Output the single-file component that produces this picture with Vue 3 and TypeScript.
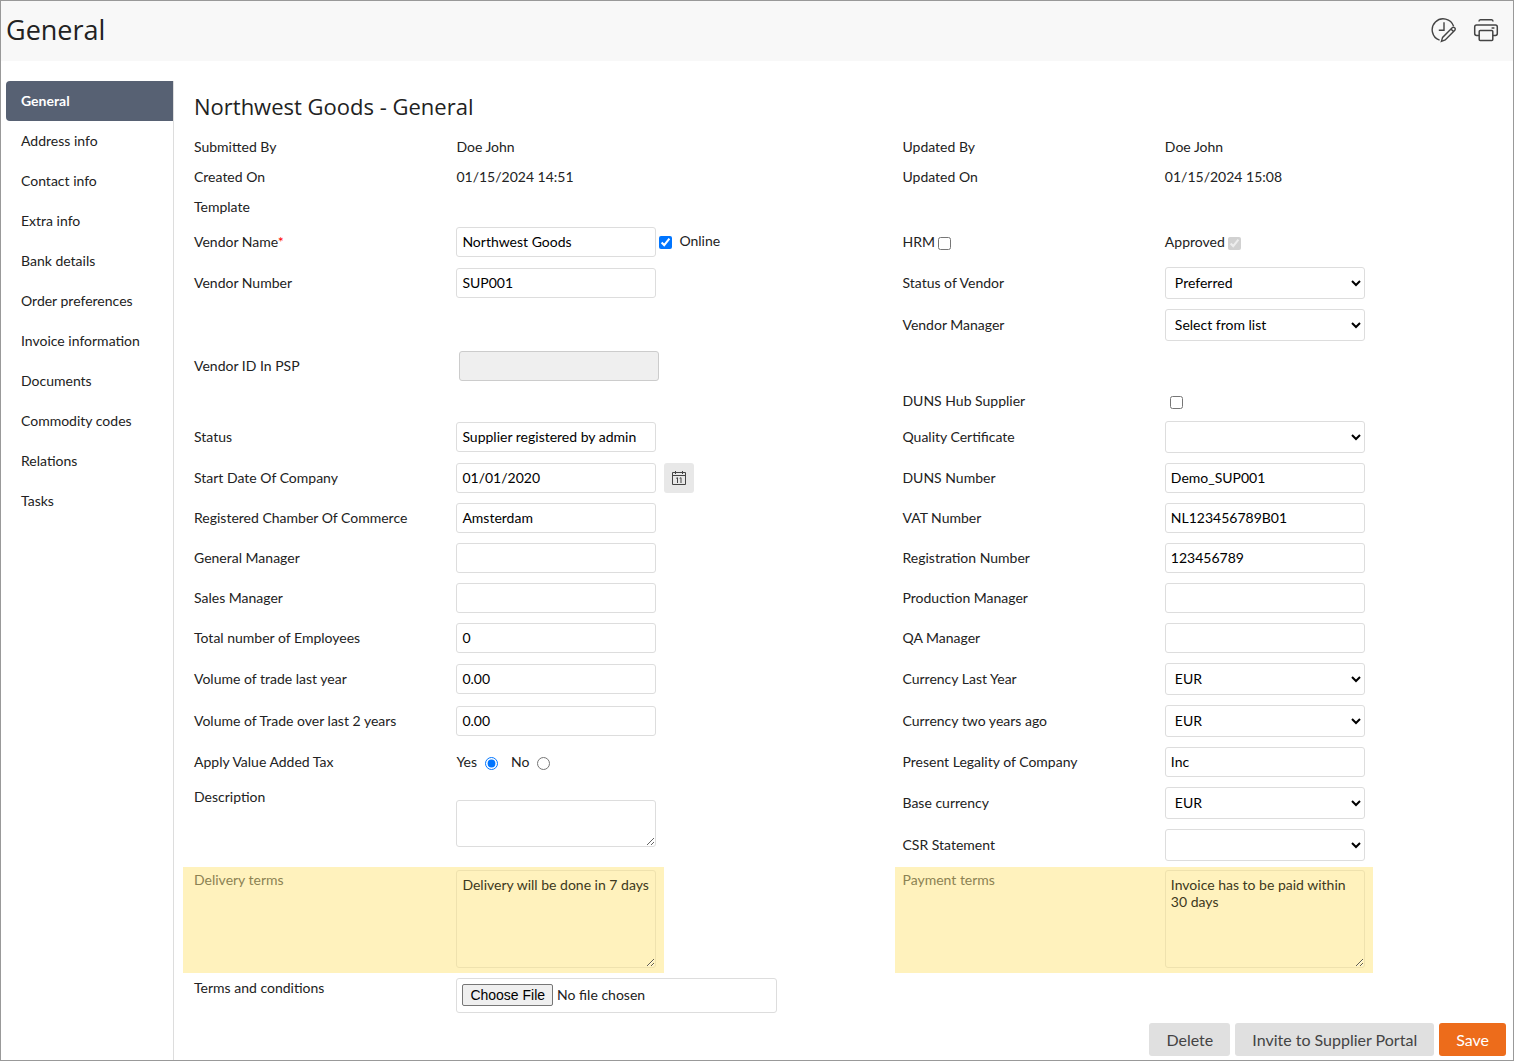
<script setup lang="ts">
import { reactive } from 'vue'

type Kind = 'static' | 'input' | 'select' | 'textarea' | 'checkbox' | 'vat' | 'flags' | 'file' | 'empty'

interface Field {
  id: string
  label: string
  kind: Kind
  value?: string
  side: 'left' | 'right'
  required?: boolean
  disabled?: boolean
  online?: boolean
  calendar?: boolean
  highlight?: boolean
  tall?: boolean
}

const navigation: string[] = [
  'General',
  'Address info',
  'Contact info',
  'Extra info',
  'Bank details',
  'Order preferences',
  'Invoice information',
  'Documents',
  'Commodity codes',
  'Relations',
  'Tasks',
]

const fields = reactive<Field[]>([
  { id: 'submitted-by', label: 'Submitted By', kind: 'static', value: 'Doe John', side: 'left' },
  { id: 'updated-by', label: 'Updated By', kind: 'static', value: 'Doe John', side: 'right' },
  { id: 'created-on', label: 'Created On', kind: 'static', value: '01/15/2024 14:51', side: 'left' },
  { id: 'updated-on', label: 'Updated On', kind: 'static', value: '01/15/2024 15:08', side: 'right' },
  { id: 'template', label: 'Template', kind: 'static', value: '', side: 'left' },
  { id: 'vendor-name', label: 'Vendor Name', kind: 'input', value: 'Northwest Goods', side: 'left', required: true, online: true },
  { id: 'hrm', label: 'HRM', kind: 'flags', side: 'right' },
  { id: 'vendor-number', label: 'Vendor Number', kind: 'input', value: 'SUP001', side: 'left' },
  { id: 'vendor-status', label: 'Status of Vendor', kind: 'select', value: 'Preferred', side: 'right' },
  { id: 'vendor-manager', label: 'Vendor Manager', kind: 'select', value: 'Select from list', side: 'right' },
  { id: 'psp-id', label: 'Vendor ID In PSP', kind: 'input', value: '', side: 'left', disabled: true },
  { id: 'spacer', label: '', kind: 'empty', side: 'right' },
  { id: 'spacer-hub', label: '', kind: 'empty', side: 'left' },
  { id: 'duns-hub', label: 'DUNS Hub Supplier', kind: 'checkbox', side: 'right' },
  { id: 'status', label: 'Status', kind: 'input', value: 'Supplier registered by admin', side: 'left' },
  { id: 'quality', label: 'Quality Certificate', kind: 'select', value: '', side: 'right' },
  { id: 'start-date', label: 'Start Date Of Company', kind: 'input', value: '01/01/2020', side: 'left', calendar: true },
  { id: 'duns-number', label: 'DUNS Number', kind: 'input', value: 'Demo_SUP001', side: 'right' },
  { id: 'chamber', label: 'Registered Chamber Of Commerce', kind: 'input', value: 'Amsterdam', side: 'left' },
  { id: 'vat-number', label: 'VAT Number', kind: 'input', value: 'NL123456789B01', side: 'right' },
  { id: 'general-manager', label: 'General Manager', kind: 'input', value: '', side: 'left' },
  { id: 'registration', label: 'Registration Number', kind: 'input', value: '123456789', side: 'right' },
  { id: 'sales-manager', label: 'Sales Manager', kind: 'input', value: '', side: 'left' },
  { id: 'production-manager', label: 'Production Manager', kind: 'input', value: '', side: 'right' },
  { id: 'employees', label: 'Total number of Employees', kind: 'input', value: '0', side: 'left' },
  { id: 'qa-manager', label: 'QA Manager', kind: 'input', value: '', side: 'right' },
  { id: 'trade-last-year', label: 'Volume of trade last year', kind: 'input', value: '0.00', side: 'left' },
  { id: 'currency-last-year', label: 'Currency Last Year', kind: 'select', value: 'EUR', side: 'right' },
  { id: 'trade-two-years', label: 'Volume of Trade over last 2 years', kind: 'input', value: '0.00', side: 'left' },
  { id: 'currency-two-years', label: 'Currency two years ago', kind: 'select', value: 'EUR', side: 'right' },
  { id: 'vat', label: 'Apply Value Added Tax', kind: 'vat', value: 'yes', side: 'left' },
  { id: 'legality', label: 'Present Legality of Company', kind: 'input', value: 'Inc', side: 'right' },
  { id: 'description', label: 'Description', kind: 'textarea', value: '', side: 'left', tall: true },
  { id: 'base-currency', label: 'Base currency', kind: 'select', value: 'EUR', side: 'right' },
  { id: 'csr', label: 'CSR Statement', kind: 'select', value: '', side: 'right' },
  { id: 'delivery-terms', label: 'Delivery terms', kind: 'textarea', value: 'Delivery will be done in 7 days', side: 'left', highlight: true },
  { id: 'payment-terms', label: 'Payment terms', kind: 'textarea', value: 'Invoice has to be paid within 30 days', side: 'right', highlight: true },
  { id: 'terms', label: 'Terms and conditions', kind: 'file', side: 'left' },
])

const flags = reactive({ online: true, hrm: false, approved: true, dunsHub: false })
</script>

<template>
  <div class="page">
    <header class="topbar">
      <h1>General</h1>
      <div class="tools">
        <button type="button" aria-label="Change history">
          <svg width="26" height="26" viewBox="0 0 26 26" fill="none" stroke="#444" stroke-width="1.4">
            <path d="M23.6 9.2A11 11 0 1 0 9.6 23.2" />
            <path d="M14 5.2v8H8.8" />
            <path d="M11.4 24.4l1.2-4 9.6-9.7q1.2-1 2.400.1t.2 2.400L15.200 23zM20.900 12l2.600 2.600" />
          </svg>
        </button>
        <button type="button" aria-label="Print">
          <svg width="26" height="26" viewBox="0 0 26 26" fill="none" stroke="#444" stroke-width="1.5">
            <path d="M6 4.600q0-1.800 1.400-1.800h11.200q1.400 0 1.400 1.800" />
            <path d="M6 18.500H3.600q-1.900 0-1.900-1.900V9.900q0-1.900 1.900-1.900h18.800q1.900 0 1.900 1.900v6.700q0 1.900-1.900 1.900H20" />
            <rect x="6.200" y="13.500" width="13.600" height="9.900" rx="1" />
            <path d="M18.600 11h2.800" />
          </svg>
        </button>
      </div>
    </header>

    <div class="body">
      <nav class="sidebar">
        <a v-for="(item, index) in navigation" :key="item" href="#" :class="{ active: index === 0 }">{{ item }}</a>
      </nav>

      <main class="content">
        <h2>Northwest Goods - General</h2>
        <form @submit.prevent>
          <div class="fields">
            <div
              v-for="field in fields"
              :key="field.id"
              class="field"
              :class="[field.side, field.kind, { highlight: field.highlight, tall: field.tall }]"
            >
              <template v-if="field.kind === 'flags'">
                <label class="flag">HRM<input v-model="flags.hrm" type="checkbox" /></label>
                <label class="flag">Approved<input v-model="flags.approved" type="checkbox" disabled /></label>
              </template>

              <template v-else-if="field.kind === 'static'">
                <span>{{ field.label }}</span>
                <span>{{ field.value }}</span>
              </template>

              <template v-else-if="field.kind === 'vat'">
                <span id="vat-label">{{ field.label }}</span>
                <div class="radios" role="radiogroup" aria-labelledby="vat-label">
                  <label>Yes<input v-model="field.value" type="radio" name="vat" value="yes" /></label>
                  <label>No<input v-model="field.value" type="radio" name="vat" value="no" /></label>
                </div>
              </template>

              <template v-else-if="field.kind !== 'empty'">
                <label :for="field.id">{{ field.label }}<span v-if="field.required" class="required">*</span></label>
                <div class="control">
                  <input
                    v-if="field.kind === 'input'"
                    :id="field.id"
                    v-model="field.value"
                    type="text"
                    :disabled="field.disabled"
                  />
                  <select v-else-if="field.kind === 'select'" :id="field.id" v-model="field.value">
                    <option>{{ field.value }}</option>
                  </select>
                  <textarea v-else-if="field.kind === 'textarea'" :id="field.id" v-model="field.value"></textarea>
                  <input v-else-if="field.kind === 'checkbox'" :id="field.id" v-model="flags.dunsHub" type="checkbox" />
                  <input v-else-if="field.kind === 'file'" :id="field.id" type="file" />

                  <label v-if="field.online" class="online">
                    <input v-model="flags.online" type="checkbox" />Online
                  </label>
                  <button v-if="field.calendar" type="button" class="calendar" aria-label="Pick a date">
                    <svg width="16" height="16" viewBox="0 0 16 16" fill="none" stroke="#444">
                      <path d="M1.5 2.5h13v12h-13zM1.5 5.5h13M4.5 1v3M11.5 1v3" />
                      <path d="M5.2 8.3l1.3-.6V13M8.7 8.3l1.3-.6V13" />
                    </svg>
                  </button>
                </div>
              </template>
            </div>
          </div>

          <div class="actions">
            <button type="button">Delete</button>
            <button type="button">Invite to Supplier Portal</button>
            <button type="submit" class="primary">Save</button>
          </div>
        </form>
      </main>
    </div>
  </div>
</template>

<style>
body {
  background: #fff;
}
</style>

<style scoped>
.page,
.page * {
  box-sizing: border-box;
}

.page {
  display: flex;
  flex-direction: column;
  min-height: 100vh;
  border: 1px solid #999;
  color: #222;
  font-family: Lato, sans-serif;
  font-size: 14px;
  line-height: 20px;
}

.topbar {
  display: flex;
  align-items: center;
  justify-content: space-between;
  height: 60px;
  padding: 0 14px 2px 5px;
  background: #f8f8f8;
}

h1,
h2 {
  margin: 0;
  font-family: 'Open Sans', sans-serif;
  font-weight: 400;
}

h1 {
  font-size: 27px;
  line-height: 36px;
}

h2 {
  padding: 7px 0 8px;
  font-size: 22px;
  line-height: 36px;
}

.tools {
  display: flex;
  gap: 17px;
}

.tools button {
  display: flex;
  padding: 0;
  border: 0;
  background: none;
}

.body {
  display: flex;
  flex: 1;
  padding-top: 20px;
}

.sidebar {
  display: flex;
  flex-direction: column;
  flex: none;
  width: 173px;
  padding-left: 5px;
  border-right: 1px solid #ddd;
}

.sidebar a {
  padding: 10px 15px;
  color: #222;
  text-decoration: none;
}

.sidebar a.active {
  border-radius: 4px 0 0 4px;
  background: #576173;
  color: #fff;
  font-weight: 700;
}

.content {
  flex: 1;
  padding: 0 7px 4px 20px;
}

.fields {
  display: grid;
  grid-template-columns: 54fr 46fr;
}

.field {
  --label-part: 20 / 54;
  display: grid;
  grid-column: 1;
  grid-template-columns: calc(100% * var(--label-part)) 1fr;
  align-items: center;
  min-height: 30px;
}

.field.right {
  --label-part: 20 / 46;
  grid-column: 2;
}

.field.tall {
  grid-row: span 2;
}

.field.textarea > label,
.field.file > label {
  align-self: start;
  padding-top: 5px;
}

.field.highlight {
  position: relative;
  z-index: 0;
  color: #8c8253;
}

.field.highlight > label {
  padding-top: 4px;
}

.field.highlight::before {
  position: absolute;
  z-index: -1;
  top: 1px;
  bottom: 0;
  left: -11px;
  width: calc(100% * var(--label-part) + 219px);
  background: #fff2bd;
  content: '';
}

.field.highlight.right::before {
  left: -7px;
  width: calc(100% * var(--label-part) + 215px);
}

.required {
  color: #f00;
}

.control {
  display: flex;
  align-items: center;
}

input,
select,
textarea {
  margin: 0;
  color: #000;
  font: inherit;
}

input[type='text'],
select,
textarea,
input[type='file'] {
  width: 200px;
  border: 1px solid #ddd;
  border-radius: 3px;
  background: #fff;
}

input[type='text'] {
  height: 30px;
  margin: 5px 0;
  padding: 0 5px 2px;
}

input[type='text']:disabled {
  margin-left: 3px;
  border-color: #ccc;
  background: #efefef;
}

select {
  height: 32px;
  margin: 5px 0;
  padding: 0 6px 2px 5px;
}

textarea {
  height: 47px;
  margin-bottom: 2px;
  padding: 5px;
  line-height: 17px;
}

.highlight textarea {
  height: 98px;
  margin: 4px 0 5px;
  border-color: #efe2ae;
  background: transparent;
  color: #3d3920;
}

input[type='file'] {
  width: 321px;
  height: 35px;
  margin: 5px 0;
  padding: 5px;
  color: #222;
}

input[type='file']::file-selector-button {
  height: 22px;
  padding: 0 7px;
  border: 1px solid #767676;
  border-radius: 2px;
  background: #efefef;
  color: #000;
  font: 14px 'Liberation Sans', sans-serif;
}

input[type='checkbox'],
input[type='radio'] {
  width: 13px;
  height: 13px;
  margin-top: 2px;
}

.checkbox input {
  margin-left: 5px;
}

.flag {
  display: flex;
  align-items: center;
  gap: 3px;
}

.online {
  display: flex;
  align-items: center;
  gap: 7px;
  margin-left: 3px;
  padding-bottom: 2px;
}

.radios {
  display: flex;
  gap: 13px;
}

.radios label {
  display: flex;
  align-items: center;
  gap: 8px;
}

.calendar {
  display: flex;
  align-items: center;
  justify-content: center;
  width: 30px;
  height: 30px;
  margin-left: 8px;
  padding: 0;
  border: 0;
  border-radius: 3px;
  background: #e8e8e8;
}

.actions {
  display: flex;
  justify-content: flex-end;
  gap: 5px;
  padding-top: 5px;
}

.actions button {
  height: 33px;
  padding: 0 17px 1px;
  border: 0;
  border-radius: 3px;
  background: #e0e0e0;
  color: #444;
  font: 16px Lato, sans-serif;
}

.actions .primary {
  background: #ed6c1b;
  color: #fff;
}
</style>
